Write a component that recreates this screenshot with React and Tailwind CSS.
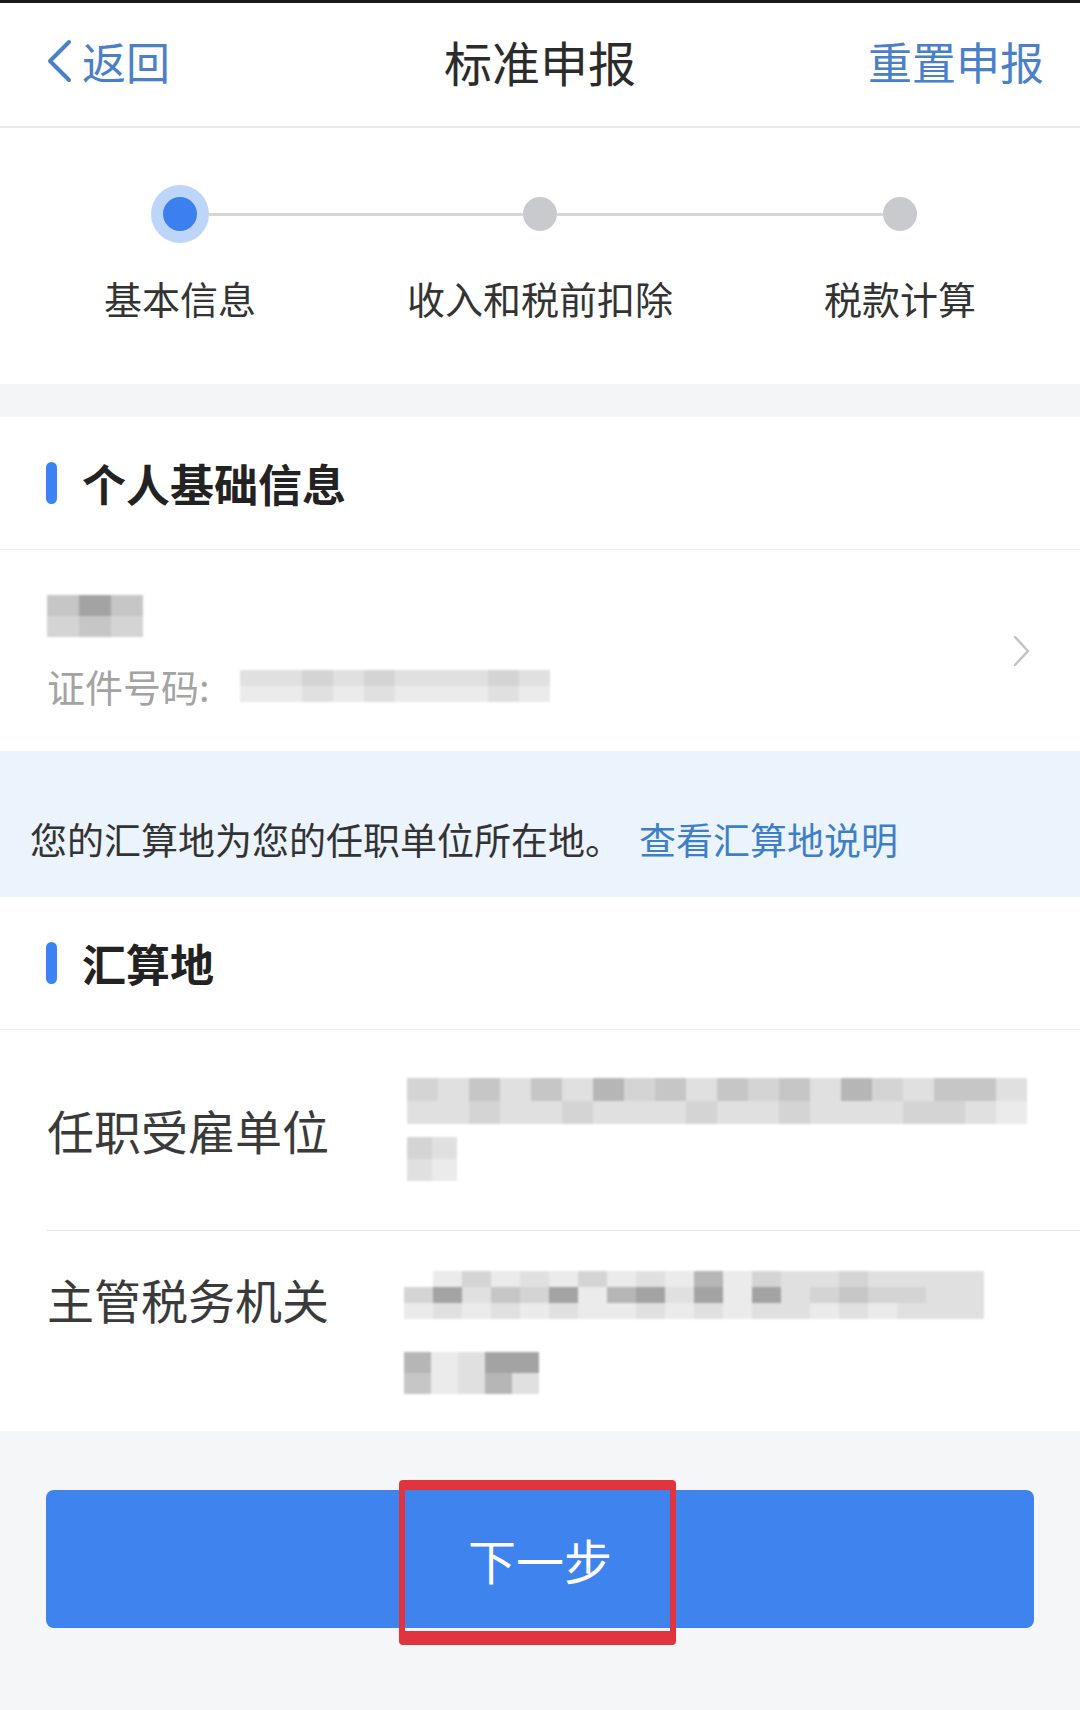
import React from "react";

const SH = [
  "bg-[#f5f5f5]",
  "bg-[#ebebeb]",
  "bg-[#e0e0e0]",
  "bg-[#d4d4d4]",
  "bg-[#c6c6c6]",
  "bg-[#b6b6b6]",
  "bg-[#a3a3a3]",
  "bg-[#909090]",
  "bg-[#ffffff]",
];

function Mosaic({ rows, cellW, rowH, className = "" }) {
  return (
    <div className={`flex flex-col blur-[1px] ${className}`}>
      {rows.map((r, i) => (
        <div key={i} className="flex">
          {r.split("").map((d, j) => (
            <div key={j} className={`${cellW} ${rowH} ${SH[Number(d)]}`} />
          ))}
        </div>
      ))}
    </div>
  );
}

function SectionTitle({ children, h }) {
  return (
    <div className={`${h} bg-white flex items-center border-b border-[#ededed]`}>
      <div className="ml-[46px] w-[11px] h-[42px] rounded-full bg-[#3d82f2]" />
      <div className="ml-[25px] text-[44px] font-bold text-[#222] leading-none">
        {children}
      </div>
    </div>
  );
}

export default function App() {
  return (
    <div className="w-[1080px] min-h-[1710px] bg-[#f5f6f8] font-['Noto_Sans_CJK_SC','Noto_Sans',sans-serif] overflow-hidden">
      <div className="h-[3px] bg-[#1a1a1a]" />
      {/* Header */}
      <header className="h-[125px] pb-[8px] bg-white border-b-2 border-[#e8e8ea] grid grid-cols-[1fr_auto_1fr] items-center">
        <div className="flex items-center pl-[44px]">
          <svg width="30" height="44" viewBox="0 0 30 44">
            <polyline
              points="25,3 6,22 25,41"
              fill="none"
              stroke="#4a80c8"
              strokeWidth="4"
              strokeLinecap="round"
              strokeLinejoin="round"
            />
          </svg>
          <span className="ml-[8px] text-[44px] leading-none text-[#4a80c8]">返回</span>
        </div>
        <div className="text-[48px] leading-none text-[#2b2b2b]">标准申报</div>
        <div className="justify-self-end pr-[36px] text-[44px] leading-none text-[#4a80c8]">
          重置申报
        </div>
      </header>

      {/* Stepper */}
      <section className="bg-white pt-[57px] pb-[60px]">
        <div className="flex items-center pl-[151px]">
          <div className="w-[58px] h-[58px] rounded-full bg-[#bcd5f8] flex items-center justify-center">
            <div className="w-[34px] h-[34px] rounded-full bg-[#3c80f0]" />
          </div>
          <div className="w-[314px] h-[3px] bg-[#d6d6d8]" />
          <div className="w-[34px] h-[34px] rounded-full bg-[#c9cacd]" />
          <div className="w-[326px] h-[3px] bg-[#d6d6d8]" />
          <div className="w-[34px] h-[34px] rounded-full bg-[#c9cacd]" />
        </div>
        <div className="grid grid-cols-3 mt-[29px] text-[38px] leading-[52px] text-[#333] text-center">
          <div>基本信息</div>
          <div>收入和税前扣除</div>
          <div>税款计算</div>
        </div>
      </section>

      <div className="h-[33px] bg-[#f4f5f7]" />

      <SectionTitle h="h-[133px]">个人基础信息</SectionTitle>

      {/* Personal row */}
      <div className="h-[201px] bg-white flex justify-between pl-[47px] pr-[49px]">
        <div className="pt-[45px] flex flex-col">
          <Mosaic rows={["464", "343"]} cellW="w-[32px]" rowH="h-[21px]" />
          <div className="mt-[25px] h-[48px] flex items-center">
            <span className="text-[38px] leading-none text-[#a3a3a3]">证件号码:</span>
            <Mosaic
              className="ml-[30px]"
              rows={["2232322232", "1121211121"]}
              cellW="w-[31px]"
              rowH="h-[16px]"
            />
          </div>
        </div>
        <div className="self-center">
          <svg width="20" height="34" viewBox="0 0 20 34">
            <polyline
              points="4,3 17,17 4,31"
              fill="none"
              stroke="#c4c4c6"
              strokeWidth="2.5"
              strokeLinecap="round"
              strokeLinejoin="round"
            />
          </svg>
        </div>
      </div>

      {/* Banner */}
      <div className="h-[146px] bg-[#ebf3fd] pl-[30px] pt-[63px] whitespace-nowrap">
        <span className="text-[37px] leading-[50px] text-[#333]">
          您的汇算地为您的任职单位所在地。
        </span>
        <span className="ml-[17px] text-[37px] leading-[50px] text-[#3f7fc6]">查看汇算地说明</span>
      </div>

      <SectionTitle h="h-[133px]">汇算地</SectionTitle>

      {/* Row 1 */}
      <div className="bg-white">
        <div className="ml-[47px] h-[201px] flex border-b border-[#e6e6e8]">
          <div className="w-[360px] self-center text-[47px] leading-[56px] text-[#3a3a3a]">
            任职受雇单位
          </div>
          <div className="pt-[48px] flex flex-col">
            <Mosaic
              rows={["32424253424342532442", "22322322232232223321"]}
              cellW="w-[31px]"
              rowH="h-[23px]"
            />
            <Mosaic className="mt-[13px]" rows={["32", "21"]} cellW="w-[25px]" rowH="h-[22px]" />
          </div>
        </div>
        {/* Row 2 */}
        <div className="ml-[47px] h-[200px] flex items-start pt-[40px]">
          <div className="w-[357px] text-[47px] leading-[56px] text-[#3a3a3a]">主管税务机关</div>
          <div className="flex flex-col">
            <Mosaic
              rows={["81312131215132232222", "36243615626162343322", "12121211212122121222"]}
              cellW="w-[29px]"
              rowH="h-[16px]"
            />
            <Mosaic
              className="mt-[33px]"
              rows={["51266", "41252"]}
              cellW="w-[27px]"
              rowH="h-[21px]"
            />
          </div>
        </div>
      </div>

      {/* Button */}
      <div className="mx-[46px] mt-[59px] h-[138px] rounded-[8px] bg-[#3f83ee] relative flex items-center justify-center">
        <span className="text-[48px] leading-none text-white">下一步</span>
        <div className="absolute left-[353px] top-[-10px] w-[277px] h-[165px] border-t-[10px] border-x-[6px] border-b-[14px] border-[#e0343e] rounded-[4px]" />
      </div>
    </div>
  );
}
